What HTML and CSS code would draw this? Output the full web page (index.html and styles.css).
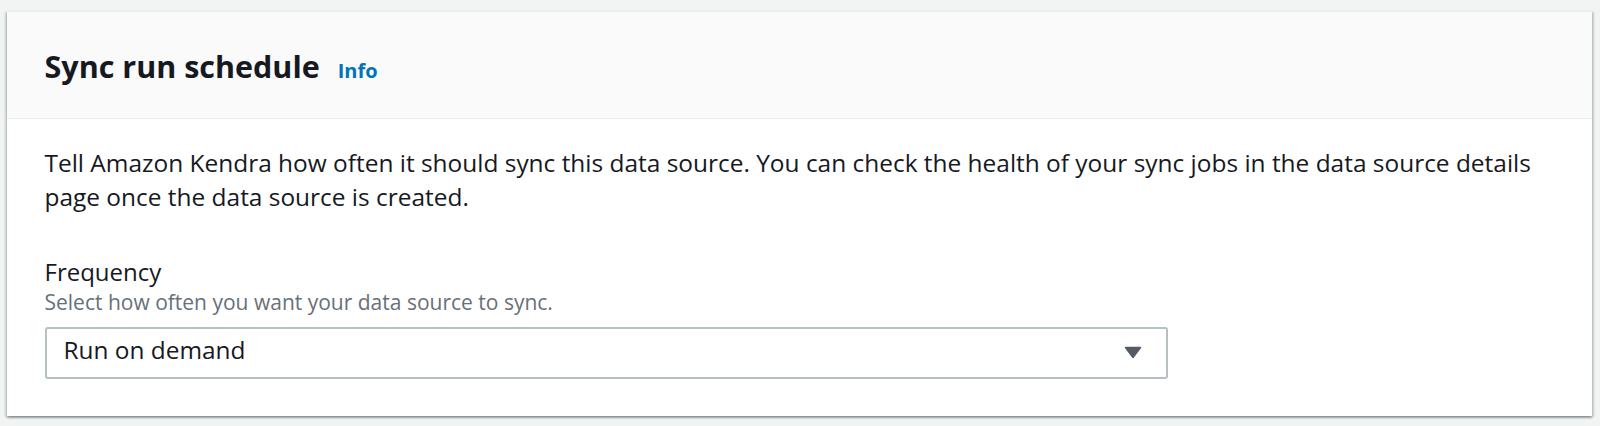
FILE: index.html
```html
<!DOCTYPE html>
<html lang="en">
<head>
<meta charset="utf-8">
<title>Sync run schedule</title>
<link rel="stylesheet" href="styles.css">
</head>
<body>
<div class="container">
  <div class="container-header">
    <h2 class="title">Sync run schedule</h2>
    <a class="info-link" href="#">Info</a>
  </div>
  <div class="container-body">
    <p class="intro">Tell Amazon Kendra how often it should sync this data source. You can check the health of your sync jobs in the data source details page once the data source is created.</p>
    <div class="field">
      <div class="field-label">Frequency</div>
      <div class="field-hint">Select how often you want your data source to sync.</div>
      <div class="select">
        <span class="select-value">Run on demand</span>
        <svg class="caret" width="18" height="13" viewBox="0 0 18 13" aria-hidden="true"><path d="M1.5 1.5 H16.5 L9 11.5 Z" fill="#545b64" stroke="#545b64" stroke-width="1.5" stroke-linejoin="round"/></svg>
      </div>
    </div>
  </div>
</div>
</body>
</html>
```
FILE: styles.css
```css
html, body {
  margin: 0;
  padding: 0;
}
body {
  background: #f2f3f3;
  font-family: "Open Sans", "Noto Sans", sans-serif;
  color: #16191f;
  padding: 11px 8px 0 7px;
  height: 426px;
  box-sizing: border-box;
  overflow: hidden;
}
.container {
  background: #ffffff;
  border-top: 1px solid #eaeded;
  box-shadow: 0 2px 2px 0 rgba(0, 28, 36, 0.3), 2px 1px 2px 0 rgba(0, 28, 36, 0.15), -2px 1px 2px 0 rgba(0, 28, 36, 0.15);
}
.container-header {
  background: #fafafa;
  border-bottom: 1px solid #eaeded;
  padding: 35px 37px 33px 37.5px;
  display: flex;
  align-items: baseline;
  gap: 18px;
}
.title {
  margin: 0;
  font-size: 30.5px;
  line-height: 38px;
  font-weight: 700;
  color: #16191f;
}
.info-link {
  font-size: 20px;
  font-weight: 700;
  color: #0073bb;
  text-decoration: none;
}
.container-body {
  padding: 27px 37px 37px 37.5px;
}
.intro {
  margin: 0;
  font-size: 24.45px;
  line-height: 34px;
}
.field {
  margin-top: 41px;
}
.field-label {
  font-size: 24px;
  line-height: 34px;
}
.field-hint {
  font-size: 21px;
  line-height: 27.5px;
  color: #687078;
}
.select {
  margin-top: 10px;
  width: 1123px;
  height: 52px;
  box-sizing: border-box;
  border: 2px solid #b4c0c1;
  border-radius: 3px;
  display: flex;
  align-items: center;
  justify-content: space-between;
  padding: 0 24px 0 17px;
}
.select-value {
  font-size: 24.4px;
  line-height: 34px;
  margin-bottom: 5px;
}
.caret {
  display: block;
}
```
